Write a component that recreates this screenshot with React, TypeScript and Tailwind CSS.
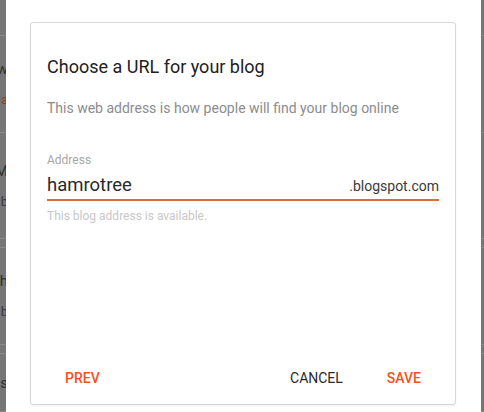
import React from "react";

// Dimmed page edge that peeks out beside the dialog panel
function PageEdge({ side }: { side: "left" | "right" }) {
  const rows = [
    { h: 36, text: "", sub: "" },
    { h: 97, text: "ow", sub: "la" },
    { h: 106, text: "M", sub: "b" },
    { h: 9, text: "", sub: "" },
    { h: 97, text: "th", sub: "b" },
    { h: 9, text: "", sub: "" },
    { h: 58, text: "is", sub: "" },
  ];
  return (
    <div
      className={`h-full overflow-hidden bg-[#767676] flex justify-end ${
        side === "left" ? "w-[6px]" : "w-[3px]"
      }`}
    >
      <div className="w-[120px] shrink-0 flex flex-col">
        {rows.map((r, i) => (
          <div
            key={i}
            className="border-b border-[#8a8a8a] flex flex-col justify-center items-end gap-[14px] shrink-0"
            style={{ height: r.h }}
          >
            {side === "left" && r.text && (
              <span className="text-[15px] leading-[18px] text-[#2e2e2e] -mr-[2px]">
                {r.text}
              </span>
            )}
            {side === "left" && r.sub && (
              <span
                className={`text-[13px] leading-[16px] -mr-[2px] ${
                  r.sub === "la" ? "text-[#7a4a1c]" : "text-[#3a3a3a]"
                }`}
              >
                {r.sub}
              </span>
            )}
          </div>
        ))}
      </div>
    </div>
  );
}

export default function App() {
  return (
    <div className="w-[484px] h-[412px] flex bg-white overflow-hidden font-['Roboto','Liberation_Sans',sans-serif]">
      <PageEdge side="left" />

      <div className="flex-1 bg-white pl-[24px] pr-[25px] pt-[22px] pb-[7px]">
        <div className="h-full flex flex-col border border-[#d7d7d7] rounded-[3px] bg-white shadow-[0_1px_2px_rgba(0,0,0,0.06)]">
          <div className="px-[16px] pt-[32px] flex-1">
            <h2 className="text-[18px] leading-[24px] font-normal text-[#212121]">
              Choose a URL for your blog
            </h2>
            <p className="mt-[19px] text-[14px] leading-[20px] text-[#8c8c8c]">
              This web address is how people will find your blog online
            </p>

            <div className="mt-[34px] text-[12px] leading-[16px] text-[#a8a8a8]">
              Address
            </div>
            <div className="mt-[5px] flex items-baseline justify-between border-b-[2px] border-[#d86c3e] pb-[1px]">
              <span className="text-[18.5px] leading-[24px] text-[#2a2a2a]">
                hamrotree
              </span>
              <span className="text-[14px] leading-[24px] text-[#3a3a3a]">
                .blogspot.com
              </span>
            </div>
            <div className="mt-[7px] text-[12px] leading-[16px] text-[#c8c8c8]">
              This blog address is available.
            </div>
          </div>

          <div className="flex items-center px-[18px] pb-[8px]">
            <button className="h-[36px] px-4 text-[14px] leading-[20px] font-medium text-[#f4511e]">
              PREV
            </button>
            <div className="flex-1" />
            <button className="h-[36px] px-4 text-[14px] leading-[20px] font-normal text-[#2a2a2a]">
              CANCEL
            </button>
            <button className="ml-[12px] h-[36px] px-4 text-[14px] leading-[20px] font-medium text-[#f4511e]">
              SAVE
            </button>
          </div>
        </div>
      </div>

      <PageEdge side="right" />
    </div>
  );
}
